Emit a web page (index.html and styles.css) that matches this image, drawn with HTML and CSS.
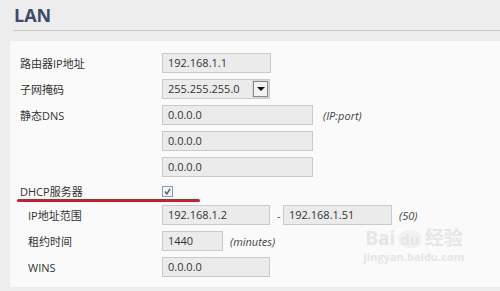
FILE: index.html
```html
<!DOCTYPE html>
<html lang="zh-CN">
  <head>
    <meta charset="UTF-8" />
    <title>LAN</title>
    <link rel="stylesheet" href="styles.css">
  </head>
  <body>
    <div class="page">
      <div class="header">
        <h1 class="title">LAN</h1>
      </div>
      <div class="panel">
        <div class="row">
          <span class="label">路由器IP地址</span>
          <span class="field w109">192.168.1.1</span>
        </div>
        <div class="row">
          <span class="label">子网掩码</span>
          <span class="field select w108">255.255.255.0<span class="arrow"></span></span>
        </div>
        <div class="row">
          <span class="label">静态DNS</span>
          <span class="field w151">0.0.0.0</span>
          <span class="hint wide">(IP:port)</span>
        </div>
        <div class="row">
          <span class="label"></span>
          <span class="field w151">0.0.0.0</span>
        </div>
        <div class="row">
          <span class="label"></span>
          <span class="field w151">0.0.0.0</span>
        </div>
        <div class="row short marked">
          <span class="label">DHCP服务器</span>
          <span class="check">
            <svg width="11" height="11" viewBox="0 0 11 11">
              <rect x="0.5" y="0.5" width="10" height="10" fill="#f3f5f9" stroke="#8d9ab3" />
              <path d="M3 5.5 L4.8 8 L8 2.8" fill="none" stroke="#4a5a80" stroke-width="1.4" />
            </svg>
          </span>
        </div>
        <div class="row">
          <span class="label sub">IP地址范围</span>
          <span class="field w108">192.168.1.2</span>
          <span class="dash">-</span>
          <span class="field w109">192.168.1.51</span>
          <span class="hint">(50)</span>
        </div>
        <div class="row">
          <span class="label sub">租约时间</span>
          <span class="field w61">1440</span>
          <span class="hint">(minutes)</span>
        </div>
        <div class="row">
          <span class="label sub">WINS</span>
          <span class="field w108">0.0.0.0</span>
        </div>
      </div>
      <div class="watermark">
        <div class="wm-top">Bai<span class="paw">du</span>经验</div>
        <div class="wm-url">jingyan.baidu.com</div>
      </div>
    </div>
  </body>
</html>
```

FILE: styles.css
```css
body {
  margin: 0;
  background: #ededed;
  font-family: "Open Sans", "Noto Sans CJK SC", sans-serif;
  font-size: 11px;
  color: #333;
}

.page {
  position: relative;
  width: 500px;
  height: 291px;
  overflow: hidden;
}

.header {
  margin-left: 13px;
  height: 30px;
  border-bottom: 1px solid #c9c9c9;
}

.title {
  margin: 0;
  padding: 5px 0 0 1px;
  font-size: 18px;
  line-height: 20px;
  font-weight: bold;
  color: #3f4a6b;
}

.panel {
  margin: 10px 0 0 10px;
  padding: 12px 0 10px 10px;
  background: #fafafa;
  display: flex;
  flex-direction: column;
  gap: 6px;
}

.row {
  display: flex;
  align-items: center;
  height: 20px;
}

.row.short {
  height: 16px;
}

.marked {
  position: relative;
}

.marked::after {
  content: "";
  position: absolute;
  left: -3px;
  top: 16px;
  width: 183px;
  height: 3px;
  border-radius: 2px;
  background: #c8202b;
}

.label {
  width: 142px;
  flex: none;
}

.label.sub {
  padding-left: 8px;
  width: 134px;
}

.field {
  box-sizing: border-box;
  height: 20px;
  line-height: 18px;
  padding-left: 5px;
  background: #ebebeb;
  border: 1px solid #cacaca;
  color: #333;
}

.w61 { width: 61px; }
.w108 { width: 108px; }
.w109 { width: 109px; }
.w151 { width: 151px; }

.select {
  display: flex;
  align-items: center;
  justify-content: space-between;
  padding-right: 1px;
}

.arrow {
  box-sizing: border-box;
  width: 15px;
  height: 16px;
  border: 1px solid #8a8a8a;
  outline: 1px solid #d8d8d8;
  background: #f3f3f3;
  display: flex;
  align-items: center;
  justify-content: center;
}

.arrow::before {
  content: "";
  border-left: 4px solid transparent;
  border-right: 4px solid transparent;
  border-top: 4px solid #111;
}

.check {
  display: flex;
}

.dash {
  margin: 0 4px 0 7px;
  width: 2px;
  color: #555;
}

.hint {
  margin-left: 7px;
  font-style: italic;
  color: #444;
}

.hint.wide {
  margin-left: 10px;
}

.watermark {
  position: absolute;
  left: 360px;
  top: 226px;
  width: 108px;
  color: #e6e6e6;
  font-weight: bold;
  text-align: center;
}

.wm-top {
  font-size: 19px;
  line-height: 24px;
  white-space: nowrap;
}

.paw {
  display: inline-block;
  margin: 0 3px;
  padding: 0 2px;
  font-size: 15px;
  line-height: 18px;
  border-radius: 9px;
  background: #f2f2f2;
}

.wm-url {
  font-size: 11px;
  line-height: 14px;
  white-space: nowrap;
}
```
